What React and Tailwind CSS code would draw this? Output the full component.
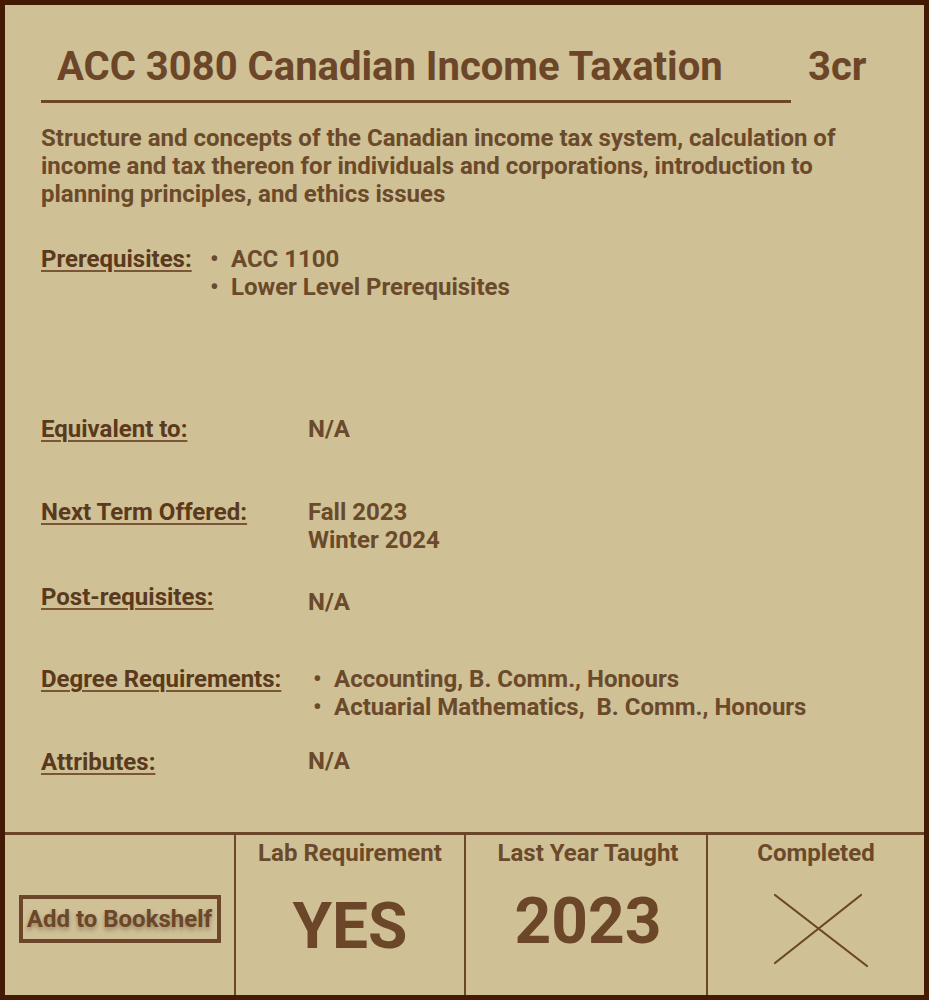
import React from "react";

const Label = ({ children, className = "" }) => (
  <span
    className={
      "text-[#5b391c] underline decoration-[#7a5636] decoration-[2px] underline-offset-[3px] " +
      className
    }
  >
    {children}
  </span>
);

const Bullets = ({ items }) => (
  <ul className="flex flex-col">
    {items.map((t) => (
      <li key={t} className="flex">
        <span className="w-[21px] shrink-0">•</span>
        <span className="whitespace-pre">{t}</span>
      </li>
    ))}
  </ul>
);

export default function App() {
  return (
    <div className="w-[929px] h-[1000px] border-[5px] border-[#431a04] bg-[#cfc096] flex flex-col font-['Roboto',sans-serif] font-bold text-[#6b4628]">
      <div className="flex-1 flex flex-col pl-[36px] pt-[38px]">
        <div className="flex items-start">
          <div className="w-[750px] border-b-[3px] border-[#6b4628] pb-[9px] pl-[16px]">
            <h1 className="text-[40px] leading-[48px]">
              ACC 3080 Canadian Income Taxation
            </h1>
          </div>
          <div className="ml-[17px] text-[40px] leading-[48px]">3cr</div>
        </div>

        <p className="mt-[21px] w-[840px] text-[24px] leading-[28px] text-[#6b4a2b]">
          Structure and concepts of the Canadian income tax system, calculation
          of income and tax thereon for individuals and corporations,
          introduction to planning principles, and ethics issues
        </p>

        <div className="flex flex-col text-[24px] leading-[28px] text-[#6b4a2b]">
          <div className="mt-[37px] flex">
            <Label className="w-[169px] shrink-0">Prerequisites:</Label>
            <Bullets items={["ACC 1100", "Lower Level Prerequisites"]} />
          </div>

          <div className="mt-[114px] flex">
            <Label className="w-[267px] shrink-0">Equivalent to:</Label>
            <span>N/A</span>
          </div>

          <div className="mt-[55px] flex">
            <Label className="w-[267px] shrink-0">Next Term Offered:</Label>
            <div className="flex flex-col">
              <span>Fall 2023</span>
              <span>Winter 2024</span>
            </div>
          </div>

          <div className="mt-[29px] flex items-start">
            <Label className="w-[267px] shrink-0">Post-requisites:</Label>
            <span className="mt-[5px]">N/A</span>
          </div>

          <div className="mt-[49px] flex">
            <div className="w-[267px] shrink-0">
              <Label>Degree Requirements:</Label>
            </div>
            <div className="ml-[5px]">
              <Bullets
                items={[
                  "Accounting, B. Comm., Honours",
                  "Actuarial Mathematics,  B. Comm., Honours",
                ]}
              />
            </div>
          </div>

          <div className="mt-[26px] flex items-start">
            <Label className="mt-[1px] w-[267px] shrink-0">Attributes:</Label>
            <span>N/A</span>
          </div>
        </div>
      </div>

      <div className="h-[163px] border-t-[3px] border-[#6b4628] grid grid-cols-[229px_230px_242px_1fr]">
        <div className="flex items-center justify-center pt-[8px]">
          <button className="border-[4px] border-[#6b4628] w-[202px] h-[48px] flex items-center justify-center text-[24px] leading-none text-[#6b4628] [text-shadow:0_3px_4px_rgba(60,30,0,0.35)]">
            Add to Bookshelf
          </button>
        </div>

        <div className="border-l-[2px] border-[#6b4628] flex flex-col items-center">
          <div className="mt-[4px] text-[24px] leading-[28px] text-[#6b4a2b]">
            Lab Requirement
          </div>
          <div className="mt-[24px] text-[64px] leading-[72px]">YES</div>
        </div>

        <div className="border-l-[2px] border-[#6b4628] flex flex-col items-center pl-[4px]">
          <div className="mt-[4px] text-[24px] leading-[28px] text-[#6b4a2b]">
            Last Year Taught
          </div>
          <div className="mt-[19px] text-[64px] leading-[72px]">2023</div>
        </div>

        <div className="border-l-[2px] border-[#6b4628] flex flex-col items-center">
          <div className="mt-[4px] text-[24px] leading-[28px] text-[#6b4a2b]">
            Completed
          </div>
          <svg
            className="mt-[26px] ml-[10px]"
            width="96"
            height="76"
            viewBox="0 0 96 76"
            fill="none"
            stroke="#6b4628"
            strokeWidth="2.2"
            strokeLinecap="round"
          >
            <line x1="2" y1="2" x2="94" y2="73" />
            <line x1="2" y1="70" x2="88" y2="2" />
          </svg>
        </div>
      </div>
    </div>
  );
}
